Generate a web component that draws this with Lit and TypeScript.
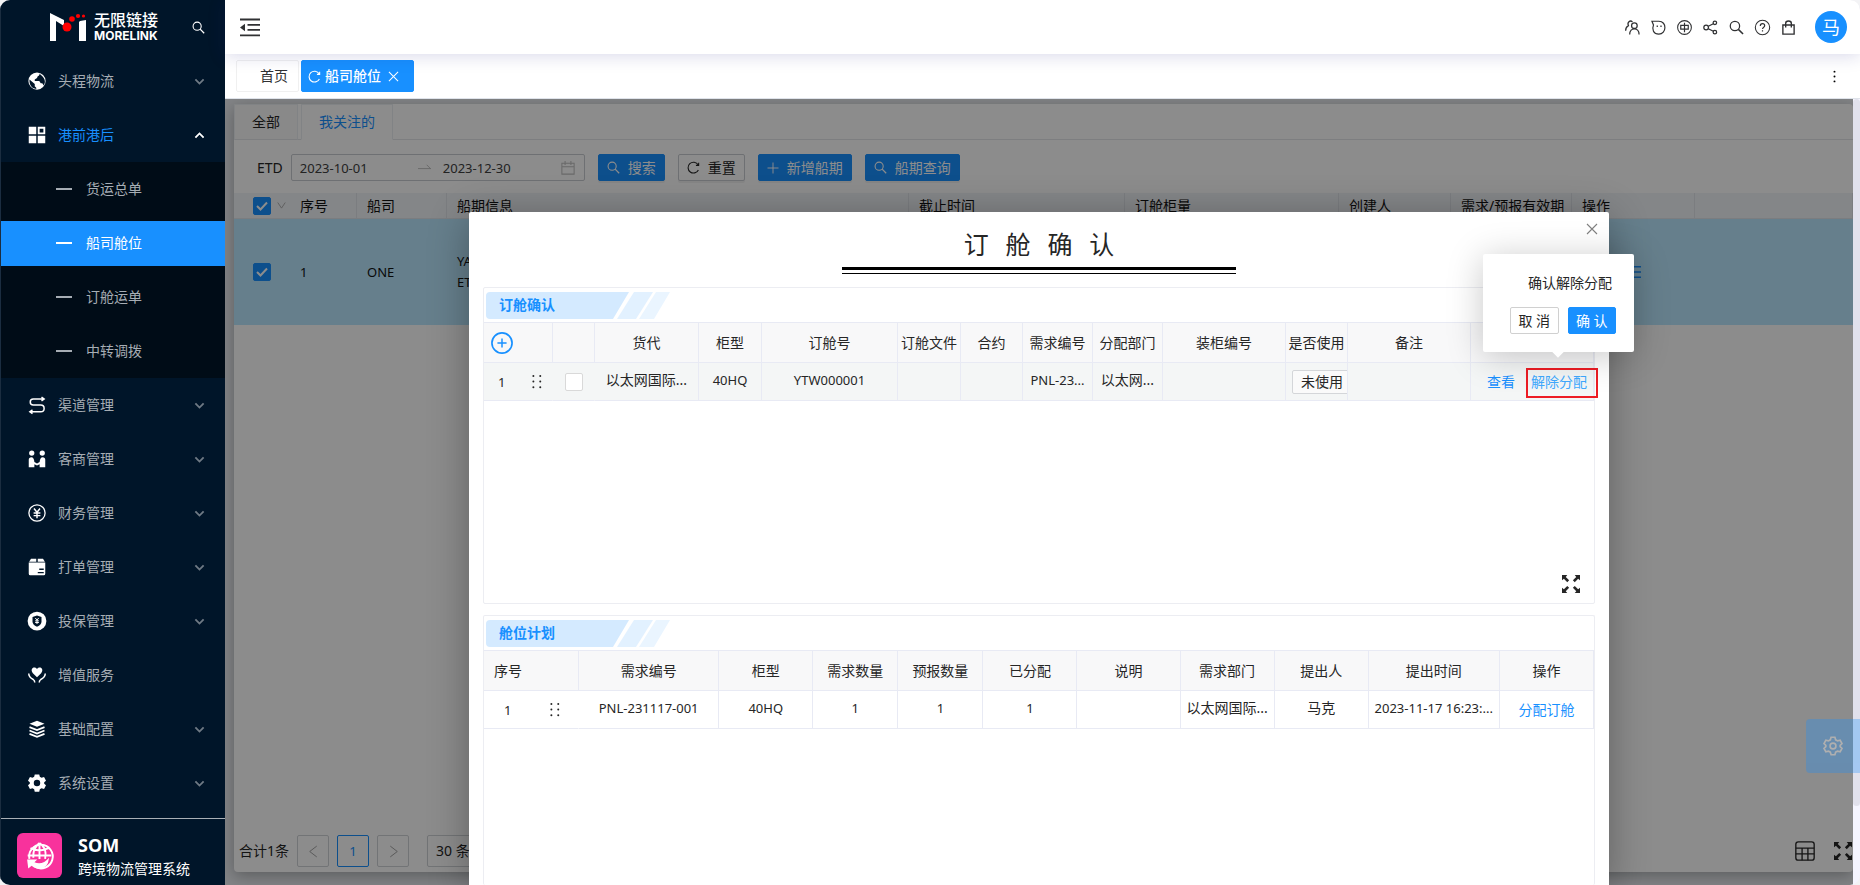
import { LitElement, html, css, svg, nothing, TemplateResult, SVGTemplateResult } from "lit";
import { customElement, property } from "lit/decorators.js";

const icons: Record<string, SVGTemplateResult> = {
  globe: svg`<circle cx="12" cy="12" r="11.500" fill="currentColor"/><path d="M2 10l7 6v3l2 2v1.500C5 22 1.500 17 2 10zM15 2c1 1 0 3-2 3.500l-1 2.500-3 2v2h6l2 3h2l2 3c3-5 2-10-6-16z" fill="#001529"/>`,
  blocks: svg`<path d="M1 1h10v10H1zM1 13h10v10H1zM13 13h10v10H13zM13 1h10v10H13zm2.500 2.500v5h5v-5z" fill="currentColor" fill-rule="evenodd"/>`,
  route: svg`<path d="M21 4H7a4 4 0 0 0 0 8h10a4.500 4.500 0 0 1 0 9H3M18 1.500L21.500 4 18 6.500M6 18.500L2.500 21 6 23.500" fill="none" stroke="currentColor" stroke-width="2"/>`,
  partners: svg`<circle cx="5" cy="4" r="3.500" fill="currentColor"/><circle cx="19" cy="4" r="3.500" fill="currentColor"/><path d="M1 13q0-3.500 3.500-3.500T8.500 16l3.500 2 3.500-2q.5-6.500 4-6.500T23 13v10h-7.500v-4L12 20.500 8.500 19v4H1z" fill="currentColor"/>`,
  yen: svg`<circle cx="12" cy="12" r="10.800" fill="none" stroke="currentColor" stroke-width="1.700"/><path d="M8 6l4 5 4-5M12 11v8M7.500 12h9M7.500 15.500h9" fill="none" stroke="currentColor" stroke-width="1.900"/>`,
  box: svg`<path d="M4 1h7v4H1.500zM13 1h7l2.500 4H13zM1 6h22v15q0 2-2 2H3q-2 0-2-2z" fill="currentColor"/><path d="M15 15h6M13 19.500h8" stroke="#001529" stroke-width="1.800"/>`,
  shield: svg`<circle cx="12" cy="12" r="12.500" fill="currentColor"/><path d="M12 4.500l6 2v6q0 4.500-6 7-6-2.500-6-7v-6z" fill="#001529"/><path d="M9.800 8l2.200 3 2.200-3M12 11v5M9.500 11.800h5M9.500 14h5" fill="none" stroke="currentColor" stroke-width="1.300"/>`,
  care: svg`<path d="M12 15L6.500 9.500C2 4 8-.500 12 4c4-4.500 10 0 5.500 5.500z" fill="currentColor"/><path d="M1 10q0 5 6 8 2 1.500 2 4M23 10q0 5-6 8-2 1.500-2 4" fill="none" stroke="currentColor" stroke-width="2"/>`,
  layers: svg`<path d="M12 1l10 4-10 4L2 5z" fill="currentColor"/><path d="M2 9.500l10 4 10-4M2 14l10 4 10-4M2 18.500l10 4 10-4" fill="none" stroke="currentColor" stroke-width="2.200"/>`,
  gear: svg`<path d="M9 .500h6l.8 3.200 2.200 1.300 3.400-1 2.600 4.900-2.400 2.100v2l2.400 2.100-2.600 4.900-3.400-1-2.200 1.300-.8 3.200H9l-.8-3.200L6 19l-3.400 1L0 15.100 2.400 13v-2L0 8.900 2.600 4 6 5l2.200-1.300zM12 7.700a4.300 4.300 0 1 0 0 8.600 4.300 4.300 0 0 0 0-8.600z" fill="currentColor" fill-rule="evenodd"/>`,
  gearLine: svg`<path d="M9.700 1.500h4.600l.9 3.100 2.300 1.300 3.100-.8 2.200 3.900-2.200 2.300v1.400l2.200 2.300-2.200 3.900-3.100-.8-2.300 1.300-.9 3.100H9.700l-.9-3.100-2.300-1.300-3.100.8L1.200 15l2.200-2.300v-1.400L1.200 9l2.200-3.900 3.100.8 2.300-1.300z" fill="none" stroke="currentColor" stroke-width="2"/><circle cx="12" cy="12" r="3.500" fill="none" stroke="currentColor" stroke-width="2"/>`,
  search: svg`<circle cx="9.500" cy="9.500" r="7.500" fill="none" stroke="currentColor" stroke-width="2"/><path d="M15 15l7.500 7.500" stroke="currentColor" stroke-width="2.400"/>`,
  down: svg`<path d="M3 7.500l9 9 9-9" fill="none" stroke="currentColor" stroke-width="4"/>`,
  up: svg`<path d="M3 16.500l9-9 9 9" fill="none" stroke="currentColor" stroke-width="4"/>`,
  thinDown: svg`<path d="M2 4l10 15L22 4" fill="none" stroke="currentColor" stroke-width="2.200"/>`,
  left: svg`<path d="M18 2L5 12l13 10" fill="none" stroke="currentColor" stroke-width="1.800"/>`,
  right: svg`<path d="M6 2l13 10L6 22" fill="none" stroke="currentColor" stroke-width="1.800"/>`,
  fold: svg`<path d="M0 3h24M9 9.500h15M9 15.500h15M0 22h24" stroke="currentColor" stroke-width="2.200"/><path d="M6 8v9L0 12.500z" fill="currentColor"/>`,
  reload: svg`<path d="M21 16.500a10 10 0 1 1-.5-9.500M21.500 3v5h-5" fill="none" stroke="currentColor" stroke-width="2"/>`,
  close: svg`<path d="M2 2l20 20M22 2L2 22" stroke="currentColor" stroke-width="2.200"/>`,
  plus: svg`<path d="M12 1v22M1 12h22" stroke="currentColor" stroke-width="1.900"/>`,
  plusCircle: svg`<circle cx="12" cy="12" r="11" fill="none" stroke="currentColor" stroke-width="1.800"/><path d="M12 7v10M7 12h10" stroke="currentColor" stroke-width="1.600"/>`,
  users: svg`<circle cx="15" cy="9" r="4.500" fill="none" stroke="currentColor" stroke-width="2"/><path d="M7.500 23c0-12 15-12 15 0M12 3c-4-3.500-9 1-6.500 6-3 1.500-4.500 4-4.500 8" fill="none" stroke="currentColor" stroke-width="2"/>`,
  chat: svg`<path d="M1.500 2h11C26 2 25 22.500 12.500 22.500 4 22.500 1 15 4 8z" fill="none" stroke="currentColor" stroke-width="1.900"/><path d="M9 10h2M15 10h2" stroke="currentColor" stroke-width="2.400"/>`,
  lang: svg`<circle cx="12" cy="12" r="11" fill="none" stroke="currentColor" stroke-width="1.700"/><path d="M6 8.500h12v6H6zM12 4.500v15" fill="none" stroke="currentColor" stroke-width="1.900"/>`,
  share: svg`<circle cx="5" cy="12" r="3.700" fill="none" stroke="currentColor" stroke-width="2"/><circle cx="19" cy="4.500" r="2.800" fill="none" stroke="currentColor" stroke-width="2"/><circle cx="19" cy="19.500" r="2.800" fill="none" stroke="currentColor" stroke-width="2"/><path d="M8.500 10l8-4M8.500 14l8 4" stroke="currentColor" stroke-width="2"/>`,
  help: svg`<circle cx="12" cy="12" r="11.500" fill="none" stroke="currentColor" stroke-width="1.700"/><path d="M8.500 9.500c0-5 7-4.500 7-.5 0 2.500-3.500 2.500-3.500 5.500M12 16.500v2" fill="none" stroke="currentColor" stroke-width="1.900"/>`,
  bag: svg`<path d="M3 8h18v14.500H3zM7.500 12V5q0-3.500 4.500-3.500T16.500 5v7" fill="none" stroke="currentColor" stroke-width="2.200"/>`,
  calendar: svg`<path d="M1.500 4h21v18.500h-21zM1.500 10h21M7 0v7M17 0v7" fill="none" stroke="currentColor" stroke-width="1.800"/>`,
  arrow: svg`<path d="M0 14h24M16 7l7 7" fill="none" stroke="currentColor" stroke-width="1.800"/>`,
  expand: svg`<path d="M0 0h7L5 2.500l4.500 4.500L7 9.500l-4.500-4.500L0 7zM24 0v7l-2.500-2L17 9.500 14.500 7 19 2.500 17 0zM0 24v-7l2.500 2L7 14.500 9.500 17 5 21.500 7 24zM24 24h-7l2-2.500-4.500-4.500 2.500-2.500 4.500 4.500 2.500-2z" fill="currentColor"/>`,
  grid: svg`<rect x="1" y="1" width="22" height="22" rx="3" fill="none" stroke="currentColor" stroke-width="1.600"/><path d="M1 8.500h22M1 15.500h22M8.500 8.500V23M15.500 8.500V23" stroke="currentColor" stroke-width="1.600"/>`,
  dots: svg`<g fill="currentColor"><circle cx="7" cy="3" r="1.600"/><circle cx="18" cy="3" r="1.600"/><circle cx="7" cy="12" r="1.600"/><circle cx="18" cy="12" r="1.600"/><circle cx="7" cy="21" r="1.600"/><circle cx="18" cy="21" r="1.600"/></g>`,
  more: svg`<g fill="currentColor"><circle cx="12" cy="3" r="1.800"/><circle cx="12" cy="12" r="1.800"/><circle cx="12" cy="21" r="1.800"/></g>`,
  lines: svg`<path d="M0 3h24M0 12h24M0 21h24" stroke="currentColor" stroke-width="2.200"/>`,
  world: svg`<path d="M3 15a10.500 10.500 0 1 1 5 7M4 5.500q8 4 16 0M1.500 12h21M12 1v14M12 1q-6 4-5.500 13M12 1q7 4 5 14" fill="none" stroke="currentColor" stroke-width="1.700"/><path d="M1 15.500h9l-2.500 2.500q7 3 13-4-1 11-11 9.500-2.500-.5-4.500-2.500L2 23.500z" fill="currentColor"/>`,
};

function icon(name: string, size: number): TemplateResult {
  return html`<svg viewBox="0 0 24 24" width=${size} height=${size} aria-hidden="true">${icons[name]}</svg>`;
}

const base = css`
  * { box-sizing: border-box; }
  svg { display: block; flex: none; overflow: visible; }
  button, input, select { font: inherit; color: inherit; margin: 0; }
  button { display: inline-flex; align-items: center; justify-content: center; border: 0; background: none; padding: 0; cursor: pointer; white-space: nowrap; }
  a { text-decoration: none; color: #1890ff; }
  table { border-collapse: separate; border-spacing: 0; table-layout: fixed; width: 100%; }
  th { font-weight: 400; }
  .latin { font-size: 13px; }
  .check {
    appearance: none; flex: none; display: block; width: 18px; height: 18px;
    border: 1px solid #d9d9d9; border-radius: 2px; background: #fff;
  }
  .check:checked {
    border-color: #1890ff;
    background: #1890ff url("data:image/svg+xml,%3Csvg xmlns='http://www.w3.org/2000/svg' viewBox='0 0 16 16'%3E%3Cpath d='M3 8l3.500 3.500L13 4.500' fill='none' stroke='white' stroke-width='2'/%3E%3C/svg%3E") center / 16px no-repeat;
  }
`;

interface MenuItem { label: string; icon: string; leaf?: boolean; children?: string[]; }

const menu: MenuItem[] = [
  { label: "头程物流", icon: "globe" },
  { label: "港前港后", icon: "blocks", children: ["货运总单", "船司舱位", "订舱运单", "中转调拨"] },
  { label: "渠道管理", icon: "route" },
  { label: "客商管理", icon: "partners" },
  { label: "财务管理", icon: "yen" },
  { label: "打单管理", icon: "box" },
  { label: "投保管理", icon: "shield" },
  { label: "增值服务", icon: "care", leaf: true },
  { label: "基础配置", icon: "layers" },
  { label: "系统设置", icon: "gear" },
];

@customElement("side-menu")
class SideMenu extends LitElement {
  static styles = [base, css`
    :host { display: flex; flex-direction: column; background: #001529; color: #a6adb4; border-left: 1px solid #1b2d40; }
    .brand { display: flex; align-items: center; height: 54px; padding: 0 20px 0 49px; color: #fff; }
    .words { display: flex; flex-direction: column; gap: 1px; margin-left: 8px; flex: 1; font-weight: 500; }
    .cn { font-size: 16px; line-height: 17px; }
    .en { font: 700 12px/12px Inter, sans-serif; }
    .brand button { color: #fff; }
    .item { display: flex; align-items: center; width: 100%; height: 54px; padding: 0 20px 0 27px; text-align: left; }
    .item svg:first-child { color: #fff; margin-right: 12px; }
    .item span { flex: 1; }
    .item svg:last-child { color: #6f7a85; }
    .item.leaf svg { color: #fff; }
    .open { color: #1890ff; }
    .item.open svg:last-child { color: #fff; }
    .sub { background: #000c17; }
    .child { display: flex; align-items: center; height: 54px; color: #a6adb4; }
    .child span { display: flex; align-items: center; gap: 14px; width: 100%; height: 45px; padding-left: 55px; }
    .child span::before { content: ""; width: 16px; height: 2px; background: currentColor; }
    .active span { background: #1890ff; color: #fff; }
    .system { display: flex; gap: 16px; margin-top: 8px; border-top: 1px solid #a9afb5; padding: 14px 16px 0; color: #fff; flex: 1; }
    .logo { display: flex; align-items: center; justify-content: center; width: 45px; height: 45px; border-radius: 6px; background: #f8329c; }
    .name { font-weight: 700; font-size: 18px; line-height: 24px; }
    .desc { line-height: 24px; }
  `];

  render() {
    return html`
      <div class="brand">
        <svg viewBox="0 0 36 28" width="36" height="28" aria-hidden="true">
          <path d="M0 0l14 7v6L6 8v20H0zM30 8l6-1v21h-7V9z" fill="#fff"/>
          <g fill="#f00"><circle cx="17" cy="14" r="4.500"/><circle cx="22" cy="6" r="2.800"/><circle cx="28" cy="3" r="2.100"/><circle cx="33.500" cy="3" r="1.600"/></g>
        </svg>
        <div class="words"><span class="cn">无限链接</span><span class="en">MORELINK</span></div>
        <button aria-label="搜索">${icon("search", 13)}</button>
      </div>
      <nav>
        ${menu.map((m) => html`
          <button class="item ${m.children ? "open" : ""} ${m.leaf ? "leaf" : ""}">
            ${icon(m.icon, 18)}<span>${m.label}</span>
            ${m.leaf ? nothing : icon(m.children ? "up" : "down", 11)}
          </button>
          ${m.children ? html`<div class="sub">
            ${m.children.map((c) => html`<a href="#" class="child ${c === "船司舱位" ? "active" : ""}"><span>${c}</span></a>`)}
          </div>` : nothing}
        `)}
      </nav>
      <div class="system">
        <div class="logo">${icon("world", 27)}</div>
        <div><div class="name">SOM</div><div class="desc">跨境物流管理系统</div></div>
      </div>
    `;
  }
}

@customElement("top-bar")
class TopBar extends LitElement {
  static styles = [base, css`
    :host { display: block; }
    .bar { position: relative; z-index: 1; display: flex; align-items: center; height: 54px; padding: 0 13px 0 15px; background: #fff; box-shadow: 0 2px 16px rgba(30, 30, 130, .17); color: #303133; }
    .tools { display: flex; gap: 11px; margin-left: auto; align-items: center; }
    .avatar { display: flex; align-items: center; justify-content: center; width: 32px; height: 32px; margin-left: 8px; border-radius: 50%; background: #1890ff; color: #fff; font-size: 18px; line-height: 32px; }
    .tabs { display: flex; align-items: center; gap: 2px; height: 45px; padding: 0 19px 0 11px; background: #fff; border-bottom: 1px solid #dfe3ea; }
    .tab { height: 32px; border: 1px solid #f0f0f0; border-radius: 2px; color: #303133; line-height: 30px; padding: 0 10px 0 23px; }
    .current { display: flex; align-items: center; gap: 4px; padding: 0 14px 0 6px; border-color: #1890ff; background: #1890ff; color: #fff; font-weight: 500; }
    .current svg:last-child { margin-left: 3px; }
    .menu { margin-left: auto; }
  `];

  render() {
    const tools = ["users", "chat", "lang", "share", "search", "help", "bag"];
    const labels = ["用户", "消息", "语言", "分享", "搜索", "帮助", "订单"];
    return html`
      <header class="bar">
        <button aria-label="折叠菜单">${icon("fold", 20)}</button>
        <div class="tools">
          ${tools.map((t, i) => html`<button aria-label=${labels[i]}>${icon(t, 15)}</button>`)}
          <span class="avatar">马</span>
        </div>
      </header>
      <nav class="tabs">
        <a class="tab" href="#">首页</a>
        <a class="tab current" href="#">${icon("reload", 13)}<span>船司舱位</span>${icon("close", 11)}</a>
        <button class="menu" aria-label="更多">${icon("more", 13)}</button>
      </nav>
    `;
  }
}

@customElement("schedule-list")
class ScheduleList extends LitElement {
  static styles = [base, css`
    :host { display: flex; flex-direction: column; background: #fff; border-radius: 4px; box-shadow: 0 4px 16px rgba(0, 0, 0, .3); color: #262626; }
    .tabs { display: flex; gap: 3px; height: 36px; border-bottom: 1px solid #e4e6ea; }
    .tabs button { height: 36px; padding: 0 17px; border: 1px solid #eceef2; border-bottom-color: #e4e6ea; background: #fafafa; }
    .tabs .on { background: #fff; color: #1890ff; border-bottom-color: #fff; }
    form { display: flex; align-items: center; gap: 13px; padding: 14px 23px 12px; }
    .range { display: flex; align-items: center; gap: 12px; width: 294px; height: 27px; margin-left: -5px; padding: 0 9px 0 8px; border: 1px solid #c9ccd2; border-radius: 2px; color: #bfbfbf; }
    .range input { flex: 1; min-width: 0; width: 0; padding: 0; border: 0; background: none; color: #404040; font-size: 13px; }
    .btn { gap: 8px; height: 27px; padding: 0 8px; border: 1px solid #1890ff; border-radius: 2px; background: #1890ff; color: #fff; box-shadow: 0 2px 0 rgba(0, 0, 0, .05); }
    .plain { border-color: #c9ccd2; background: #fff; color: #262626; }
    th { height: 26px; padding: 0 0 0 10px; background: #f1f4f8; border-right: 1px solid #e0e3ea; border-bottom: 1px solid #e0e3ea; text-align: left; color: #111; white-space: nowrap; }
    td { height: 106px; padding: 0 0 0 10px; background: #bae7ff; line-height: 21px; color: #111; }
    th:first-child, td:first-child { padding-left: 19px; border-right: 0; }
    .all { display: flex; align-items: center; gap: 6px; color: #a0a0a0; }
    td .lines { margin-left: 45px; color: #1890ff; display: block; }
    .foot { display: flex; align-items: center; margin-top: auto; height: 36px; padding: 0 1px 0 5px; }
    .pager { display: flex; align-items: center; gap: 8px; flex: 1; }
    .pager button { width: 32px; height: 32px; border: 1px solid #d0d3d8; border-radius: 2px; color: #a0a0a0; font-size: 13px; }
    .pager .on { border-color: #1890ff; color: #1890ff; }
    .pager select { height: 32px; width: 104px; margin-left: 10px; padding: 0 8px; border: 1px solid #d0d3d8; border-radius: 2px; background: #fff; appearance: none; font-size: 14px; }
    .foot > button { margin-left: 19px; }
    .pad { height: 3px; }
  `];

  render() {
    const widths = [56, 67, 90, 462, 216, 214, 112, 121, 123];
    return html`
      <div class="tabs"><button>全部</button><button class="on">我关注的</button></div>
      <form>
        <label for="from">ETD</label>
        <div class="range">
          <input id="from" value="2023-10-01" />${icon("arrow", 13)}<input aria-label="结束日期" value="2023-12-30" />${icon("calendar", 14)}
        </div>
        <button type="button" class="btn">${icon("search", 13)}搜索</button>
        <button type="button" class="btn plain">${icon("reload", 13)}重置</button>
        <button type="button" class="btn">${icon("plus", 12)}新增船期</button>
        <button type="button" class="btn">${icon("search", 13)}船期查询</button>
      </form>
      <table>
        <colgroup>${widths.map((w) => html`<col width=${w} />`)}<col /></colgroup>
        <thead><tr>
          <th><div class="all"><input class="check" type="checkbox" aria-label="全选" checked />${icon("thinDown", 9)}</div></th>
          <th>序号</th><th>船司</th><th>船期信息</th><th>截止时间</th><th>订舱柜量</th><th>创建人</th><th>需求/预报有效期</th><th>操作</th><th></th>
        </tr></thead>
        <tbody><tr>
          <td><input class="check" type="checkbox" aria-label="选择第1行" checked /></td>
          <td class="latin">1</td><td class="latin">ONE</td><td class="latin">YA<br />ET</td>
          <td></td><td></td><td></td><td></td>
          <td><button class="lines" aria-label="操作">${icon("lines", 14)}</button></td><td></td>
        </tr></tbody>
      </table>
      <div class="foot">
        <div class="pager">
          <span>合计1条</span>
          <button aria-label="上一页">${icon("left", 13)}</button>
          <button class="on">1</button>
          <button aria-label="下一页">${icon("right", 13)}</button>
          <select aria-label="每页条数"><option>30 条/页</option></select>
        </div>
        <button aria-label="列设置">${icon("grid", 20)}</button>
        <button aria-label="全屏">${icon("expand", 18)}</button>
      </div>
      <div class="pad"></div>
    `;
  }
}

@customElement("panel-card")
class PanelCard extends LitElement {
  @property() heading = "";
  static styles = [base, css`
    :host { display: flex; flex-direction: column; border: 1px solid #ecedf2; border-radius: 2px; position: relative; }
    .head { display: grid; align-items: center; height: 34px; padding-left: 2px; }
    .head > * { grid-area: 1 / 1; }
    h3 { margin: 0; padding-left: 13px; font-size: 14px; font-weight: 700; line-height: 28px; color: #1890ff; }
  `];
  render() {
    return html`
      <div class="head">
        <svg viewBox="0 0 184 27" width="184" height="27" aria-hidden="true">
          <path d="M4 0h139l-16 27H4q-4 0-4-4V4q0-4 4-4z" fill="#d4eaff"/>
          <path d="M148 0h19l-17 27h-19z" fill="#e2f1ff"/><path d="M170 0h14l-16 27h-15z" fill="#eaf5ff"/>
        </svg>
        <h3>${this.heading}</h3>
      </div>
      <slot></slot>
    `;
  }
}

@customElement("booking-dialog")
class BookingDialog extends LitElement {
  static styles = [base, css`
    :host { display: flex; flex-direction: column; width: 1140px; padding: 0 14px; background: #fff; border-radius: 2px 2px 0 0; box-shadow: 0 6px 40px rgba(0, 0, 0, .32); position: relative; color: #262626; }
    .close { position: absolute; top: 11px; right: 11px; color: #808080; }
    h2 { margin: 12px auto 0; width: 394px; padding-bottom: 4px; text-align: center; white-space: pre; font: 400 25px/39px "Noto Sans CJK SC", sans-serif; }
    .rule { width: 394px; height: 7px; margin: 0 auto 13px; border-top: 3px solid #000; border-bottom: 1px solid #000; }
    .confirm { height: 317px; margin-bottom: 11px; }
    .plan { flex: 1; border-bottom: 0; }
    th, td { border-right: 1px solid #e8eaf4; border-bottom: 1px solid #e8eaf4; padding: 0; text-align: center; white-space: nowrap; line-height: 20px; }
    th { height: 41px; border-top: 1px solid #e8eaf4; background: #f8f8f9; }
    td { height: 38px; }
    td.latin, td.text { padding-bottom: 4px; }
    .hover td { background: #f4f6f6; }
    .bare { border-right-color: transparent; background-clip: padding-box; }
    .hover .bare { border-right-color: #f4f6f6; }
    .add { display: flex; margin-left: 7px; color: #1890ff; }
    .order { display: flex; align-items: center; gap: 24px; padding: 0 0 0 14px; font-size: 13px; }
    .wide { gap: 36px; padding-left: 20px; }
    .left { text-align: left; padding-left: 10px; }
    .hover .check { margin: auto; }
    .state { overflow: hidden; padding-left: 6px; }
    .state select { display: block; width: 68px; height: 24px; padding: 0 8px; appearance: none; border: 1px solid #d4d6d9; border-radius: 2px; background: #fafafa; font-size: 14px; }
    .actions { display: flex; align-items: center; gap: 16px; padding: 1px 0 0 16px; }
    .anchor { position: relative; color: #40a9ff; }
    .mark { position: absolute; top: -4px; left: -5px; width: 72px; height: 30px; border: 2px solid #ed1c24; pointer-events: none; }
    .expand { position: absolute; right: 14px; bottom: 10px; }
    .pop { position: absolute; z-index: 2; right: -47px; bottom: 40px; width: 151px; height: 98px; padding: 18px 18px 18px 27px; border-radius: 2px; background: #fff; box-shadow: 0 4px 36px rgba(0, 0, 0, .22); color: #262626; }
    .pop::after { content: ""; position: absolute; left: 71px; bottom: -4px; width: 8px; height: 8px; background: #fff; transform: rotate(45deg); }
    .pop p { margin: 0 0 13px; padding-left: 14px; line-height: 22px; }
    .choices { display: flex; gap: 9px; }
    .choices button { flex: 1; height: 27px; border: 1px solid #d0d0d0; border-radius: 2px; background: #fff; }
    .choices .ok { border-color: #1890ff; background: #1890ff; color: #fff; }
  `];

  render() {
    const confirmCols = [69, 42, 104, 63, 136, 63, 62, 70, 70, 123, 62, 123, 123];
    const planCols = [95, 140, 94, 85, 85, 94, 103, 94, 94, 131, 94];
    const confirmHeads = ["货代", "柜型", "订舱号", "订舱文件", "合约", "需求编号", "分配部门", "装柜编号", "是否使用", "备注", ""];
    const planHeads = ["需求编号", "柜型", "需求数量", "预报数量", "已分配", "说明", "需求部门", "提出人", "提出时间", "操作"];
    return html`
      <button class="close" aria-label="关闭">${icon("close", 12)}</button>
      <h2>订   舱   确   认</h2>
      <div class="rule"></div>
      <panel-card class="confirm" heading="订舱确认">
        <table>
          <colgroup>${confirmCols.map((w) => html`<col width=${w} />`)}</colgroup>
          <thead><tr>
            <th><button class="add" aria-label="新增">${icon("plusCircle", 22)}</button></th><th></th>
            ${confirmHeads.map((h) => html`<th>${h}</th>`)}
          </tr></thead>
          <tbody><tr class="hover">
            <td class="bare"><div class="order">1${icon("dots", 15)}</div></td>
            <td class="bare"><input class="check" type="checkbox" aria-label="选择" /></td>
            <td class="text">以太网国际...</td><td class="latin">40HQ</td><td class="latin">YTW000001</td>
            <td></td><td></td><td class="latin">PNL-23...</td><td class="text">以太网...</td><td></td>
            <td class="state"><select aria-label="是否使用"><option>未使用</option></select></td><td></td>
            <td><div class="actions">
              <a href="#">查看</a>
              <div class="anchor">
                <a class="anchor" href="#">解除分配</a>
                <span class="mark"></span>
                <div class="pop" role="dialog">
                  <p>确认解除分配</p>
                  <div class="choices"><button>取 消</button><button class="ok">确 认</button></div>
                </div>
              </div>
            </div></td>
          </tr></tbody>
        </table>
        <button class="expand" aria-label="全屏">${icon("expand", 18)}</button>
      </panel-card>
      <panel-card class="plan" heading="舱位计划">
        <table>
          <colgroup>${planCols.map((w) => html`<col width=${w} />`)}</colgroup>
          <thead><tr><th class="left">序号</th>${planHeads.map((h) => html`<th>${h}</th>`)}</tr></thead>
          <tbody><tr>
            <td class="bare"><div class="order wide">1${icon("dots", 15)}</div></td>
            <td class="latin">PNL-231117-001</td><td class="latin">40HQ</td><td class="latin">1</td><td class="latin">1</td><td class="latin">1</td>
            <td></td><td class="text">以太网国际...</td><td class="text">马克</td><td class="latin">2023-11-17 16:23:...</td>
            <td><a href="#">分配订舱</a></td>
          </tr></tbody>
        </table>
      </panel-card>
    `;
  }
}

@customElement("app-root")
class AppRoot extends LitElement {
  static styles = [base, css`
    :host { display: block; height: 100vh; background: #f3f3f5; font: 14px/20px "Noto Sans", "Noto Sans CJK SC", sans-serif; }
    .shell { position: relative; display: grid; grid-template-columns: 225px minmax(0, 1fr); height: 100%; border-radius: 10px; overflow: hidden; }
    .main { display: flex; flex-direction: column; min-width: 0; min-height: 0; }
    .body { display: flex; flex: 1; min-height: 0; }
    .view { position: relative; flex: 1; min-width: 0; display: flex; padding: 5px 0 13px 9px; background: #edf0f4; overflow: hidden; }
    .list { flex: 1; min-width: 0; }
    .mask { position: absolute; inset: 0; display: flex; justify-content: center; padding-top: 113px; background: rgba(0, 0, 0, .45); }
    .scroll { width: 7px; background: #f5f5ff; }
    .thumb { height: 90%; border-radius: 4px; background: #e1e1ec; }
    .settings { position: absolute; right: 0; bottom: 112px; width: 54px; height: 54px; border-radius: 4px 0 0 4px; background: #1890ff; color: #fff; opacity: .3; }
  `];

  render() {
    return html`
      <div class="shell">
        <side-menu></side-menu>
        <div class="main">
          <top-bar></top-bar>
          <div class="body">
            <div class="view">
              <schedule-list class="list"></schedule-list>
              <div class="mask"><booking-dialog></booking-dialog></div>
            </div>
            <div class="scroll"><div class="thumb"></div></div>
          </div>
        </div>
        <button class="settings" aria-label="设置">${icon("gearLine", 20)}</button>
      </div>
    `;
  }
}
